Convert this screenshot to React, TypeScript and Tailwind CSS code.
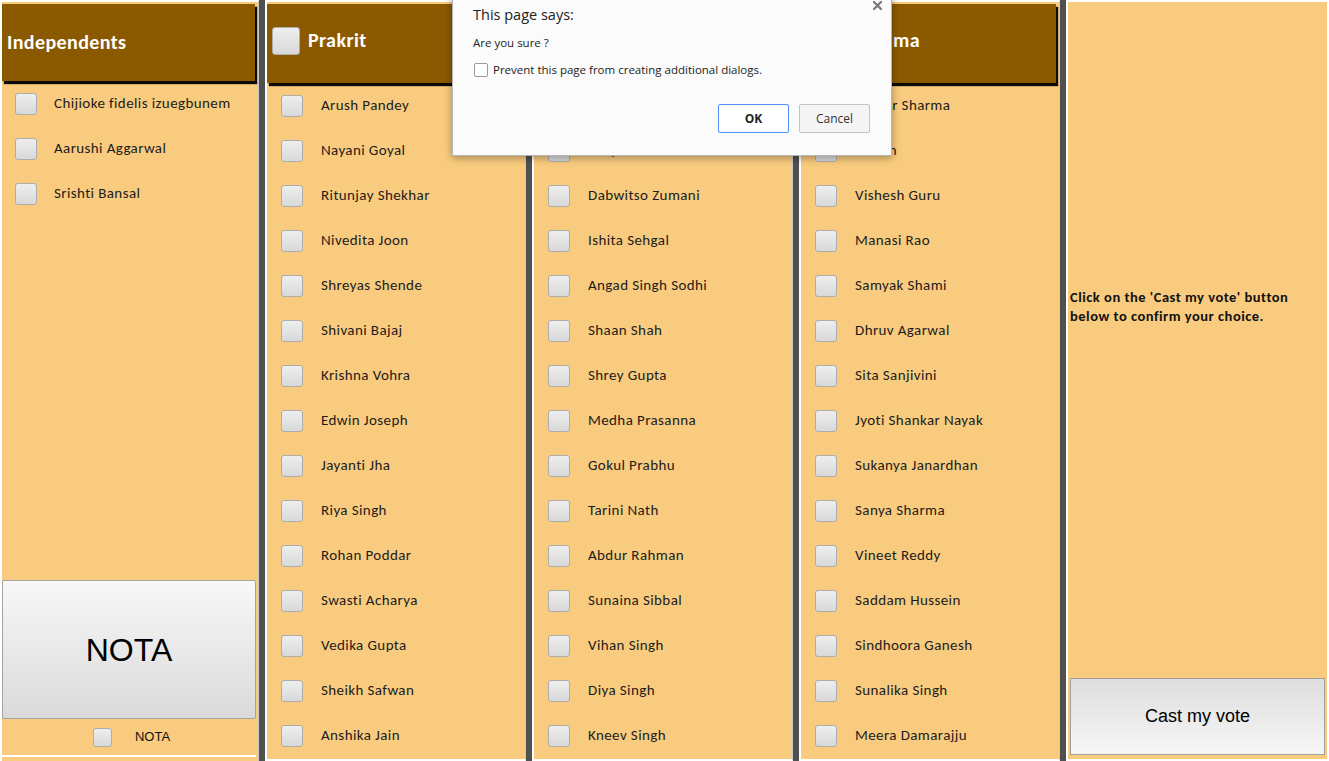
import React from "react";

const independents = ["Chijioke fidelis izuegbunem", "Aarushi Aggarwal", "Srishti Bansal"];

const prakrit = [
  "Arush Pandey",
  "Nayani Goyal",
  "Ritunjay Shekhar",
  "Nivedita Joon",
  "Shreyas Shende",
  "Shivani Bajaj",
  "Krishna Vohra",
  "Edwin Joseph",
  "Jayanti Jha",
  "Riya Singh",
  "Rohan Poddar",
  "Swasti Acharya",
  "Vedika Gupta",
  "Sheikh Safwan",
  "Anshika Jain",
];

const pali = [
  "Rahul Verma",
  "Kavya Menon",
  "Dabwitso Zumani",
  "Ishita Sehgal",
  "Angad Singh Sodhi",
  "Shaan Shah",
  "Shrey Gupta",
  "Medha Prasanna",
  "Gokul Prabhu",
  "Tarini Nath",
  "Abdur Rahman",
  "Sunaina Sibbal",
  "Vihan Singh",
  "Diya Singh",
  "Kneev Singh",
];

const dhamma = [
  "Ishwar Sharma",
  "Sachin",
  "Vishesh Guru",
  "Manasi Rao",
  "Samyak Shami",
  "Dhruv Agarwal",
  "Sita Sanjivini",
  "Jyoti Shankar Nayak",
  "Sukanya Janardhan",
  "Sanya Sharma",
  "Vineet Reddy",
  "Saddam Hussein",
  "Sindhoora Ganesh",
  "Sunalika Singh",
  "Meera Damarajju",
];

const font = { fontFamily: "Carlito, Lato, 'Open Sans', sans-serif" };

function Box({ size = "w-[22px] h-[22px]" }: { size?: string }) {
  return (
    <span
      className={`${size} shrink-0 rounded-[3px] border border-[#adadad] bg-linear-to-b from-[#eeeeee] to-[#d9d9d9]`}
    />
  );
}

function Header({ title, check }: { title: string; check?: boolean }) {
  return (
    <div
      className={`${check ? "h-[79px] pb-[5px]" : "h-[77px]"} mr-[3px] mt-[2px] bg-[#8b5a00] shadow-[2px_3px_1px_rgba(0,0,0,0.95)] flex items-center gap-[8px] px-[5px] shrink-0`}
    >
      {check && <Box size="w-[28px] h-[28px]" />}
      <span className="text-white font-bold text-[20px] tracking-[0.4px] -mt-[2px]">{title}</span>
    </div>
  );
}

function Row({ name, party }: { name: string; party?: boolean }) {
  return (
    <div className={`h-[45px] flex items-center ${party ? "pl-[14px] gap-[18px]" : "pl-[13px] gap-[17px]"}`}>
      <Box />
      <span className="text-[15px] tracking-[0.4px] text-[#1c1c1c]">{name}</span>
    </div>
  );
}

function Party({ title, names }: { title: string; names: string[] }) {
  return (
    <div className="w-[261px] h-[761px] bg-[#f9cb7e] border-2 border-white border-r-[#c9c9c9] border-r flex flex-col shrink-0">
      <Header title={title} check />
      {names.map((n) => (
        <Row key={n} name={n} party />
      ))}
    </div>
  );
}

export default function App() {
  return (
    <div className="relative w-[1329px] h-[761px] overflow-hidden bg-[#505050] flex gap-[6px]" style={font}>
      {/* Independents */}
      <div className="w-[259px] h-[761px] bg-[#f9cb7e] border-t-2 border-l-2 border-white border-r border-r-[#c9c9c9] flex flex-col shrink-0">
        <Header title="Independents" />
        {independents.map((n) => (
          <Row key={n} name={n} />
        ))}
        <div className="flex-1" />
        <button
          className="h-[139px] w-[254px] rounded-[2px] border border-[#a3a3a3] bg-linear-to-b from-[#f8f8f8] to-[#dadada] text-[32px] text-black"
          style={{ fontFamily: "'Liberation Sans', Arial, sans-serif" }}
        >
          NOTA
        </button>
        <div className="h-[36px] flex items-center justify-center gap-[23px] pl-[3px]">
          <Box size="w-[19px] h-[19px]" />
          <span className="text-[13px] text-[#111]" style={{ fontFamily: "'Liberation Sans', Arial, sans-serif" }}>
            NOTA
          </span>
        </div>
        <div className="h-[2px] bg-white mr-[2px]" />
        <div className="h-[4px]" />
      </div>

      <Party title="Prakrit" names={prakrit} />
      <Party title="Pali" names={pali} />
      <Party title="Dhamma" names={dhamma} />

      {/* Confirm column */}
      <div className="flex-1 h-[761px] bg-[#f9cb7e] border-2 border-white flex flex-col px-[2px]">
        <p className="mt-[286px] text-[14.5px] tracking-[0.5px] font-bold leading-[19px] text-[#111]">
          Click on the 'Cast my vote' button
          <br />
          below to confirm your choice.
        </p>
        <div className="flex-1" />
        <button
          className="h-[77px] mb-[4px] border border-[#a0a0a0] bg-linear-to-b from-[#dedede] to-[#f6f6f6] text-[18px] text-black"
          style={{ fontFamily: "'Liberation Sans', Arial, sans-serif" }}
        >
          Cast my vote
        </button>
      </div>

      {/* Alert dialog */}
      <div
        className="absolute left-[452px] top-[-10px] w-[440px] h-[166px] bg-[#fbfbfb] border border-[#b5b5b5] shadow-[0_2px_8px_rgba(0,0,0,0.35)]"
        style={{ fontFamily: "'Open Sans', 'Noto Sans', sans-serif" }}
      >
        <svg className="absolute right-[9px] top-[10px]" width="9" height="9" viewBox="0 0 9 9">
          <path d="M1 1L8 8M8 1L1 8" stroke="#777" strokeWidth="2.2" strokeLinecap="square" />
        </svg>
        <div className="pl-[20px] pt-[14px]">
          <div className="text-[14.5px] text-[#222] leading-[20px]">This page says:</div>
          <div className="mt-[10px] text-[11.5px] text-[#222] leading-[16px]">Are you sure ?</div>
          <label className="mt-[10px] flex items-center gap-[5px]">
            <span className="w-[14px] h-[14px] rounded-[2px] border border-[#9a9a9a] bg-white ml-[1px]" />
            <span className="text-[11.5px] text-[#222]">Prevent this page from creating additional dialogs.</span>
          </label>
        </div>
        <div className="absolute right-[21px] bottom-[22px] flex gap-[10px]">
          <button className="w-[71px] h-[29px] rounded-[2px] border border-[#4d90fe] bg-white text-[12px] font-bold text-[#222]">
            OK
          </button>
          <button className="w-[71px] h-[29px] rounded-[2px] border border-[#c4c4c4] bg-[#f5f5f5] text-[12px] text-[#333]">
            Cancel
          </button>
        </div>
      </div>
    </div>
  );
}
